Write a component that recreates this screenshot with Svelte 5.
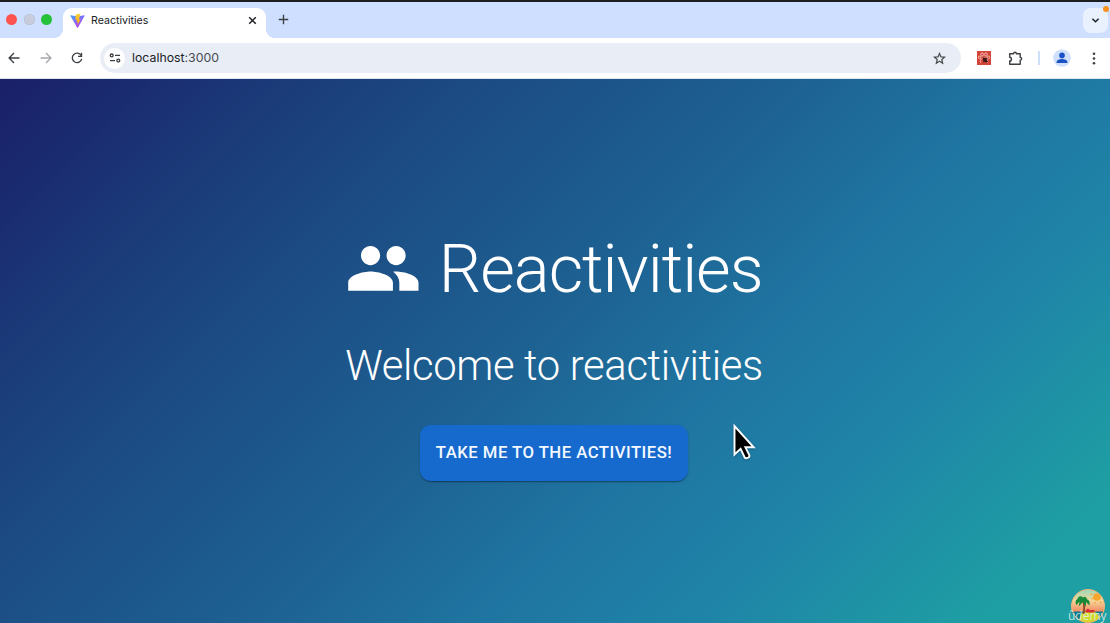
<script>
  const title = 'Reactivities';
</script>

<div class="window">
  <header class="tabstrip">
    <div class="lights"><i class="red"></i><i class="grey"></i><i class="green"></i></div>
    <div class="tab">
      <svg class="vite" width="15" height="15" viewBox="0 0 32 32">
        <defs>
          <linearGradient id="vg" x1="0" y1="0" x2=".6" y2="1"><stop offset="0" stop-color="#41a9ff" /><stop offset="1" stop-color="#b936f4" /></linearGradient>
          <linearGradient id="vy" x1="0" y1="0" x2="0" y2="1"><stop offset="0" stop-color="#ffd43b" /><stop offset="1" stop-color="#ffa000" /></linearGradient>
        </defs>
        <path fill="url(#vg)" d="M31 6.5 17 31c-.4.7-1.400.7-1.800 0L1 6.500C.5 5.600 1.300 4.600 2.300 4.800L16 7.200l13.700-2.400c1-.2 1.800.8 1.300 1.700z" />
        <path fill="url(#vy)" d="M22.500 1 12.300 3l-.9 11.800 3.500-.7-1.100 5.200 2.800-.8-1.200 8.200 7.400-13.600-4 .7z" />
      </svg>
      <span>{title}</span>
      <svg class="close" width="9" height="9" viewBox="0 0 9 9"><path d="M1.200 1.200l6.600 6.600M7.800 1.200L1.200 7.800" stroke="#202124" stroke-width="1.5" /></svg>
    </div>
    <svg class="plus" width="11" height="11" viewBox="0 0 11 11"><path d="M5.500 .8v9.400M.8 5.500h9.400" stroke="#3c4043" stroke-width="1.350" /></svg>
    <div class="tabsearch">
      <svg width="9" height="7" viewBox="0 0 9 7"><path d="M1.400 1.700l3.100 3.100 3.100-3.100" fill="none" stroke="#202124" stroke-width="1.500" /></svg>
      <b class="alert"></b>
    </div>
  </header>

  <nav class="toolbar">
    <svg class="back" width="12" height="12" viewBox="0 0 12 12"><path d="M11.500 6H1.400M6 1.100L1.100 6 6 10.900" fill="none" stroke="#3c4043" stroke-width="1.350" /></svg>
    <svg class="forward" width="12" height="12" viewBox="0 0 12 12"><path d="M.5 6h10.100M6 1.100L10.900 6 6 10.900" fill="none" stroke="#a5a8ac" stroke-width="1.350" /></svg>
    <svg class="reload" width="12" height="12" viewBox="0 0 12 12"><path d="M10.300 3.700A4.750 4.750 0 1 0 10.700 6.800" fill="none" stroke="#3c4043" stroke-width="1.350" /><path d="M10.500 .8v3.500H7" fill="none" stroke="#3c4043" stroke-width="1.350" /></svg>
    <div class="address">
      <span class="site">
        <svg width="12" height="10" viewBox="0 0 12 10" fill="none" stroke="#3c4043" stroke-width="1.350"><circle cx="2.700" cy="2.400" r="1.450" /><path d="M6 2.400h5M1 7.600h5" /><circle cx="9.300" cy="7.600" r="1.450" /></svg>
      </span>
      <span class="url">localhost<span>:3000</span></span>
      <svg class="star" width="15" height="15" viewBox="0 0 24 24"><path fill="#3c4043" d="M22 9.240l-7.190-.62L12 2 9.190 8.630 2 9.240l5.460 4.730L5.820 21 12 17.270 18.180 21l-1.630-7.030L22 9.240zM12 15.400l-3.760 2.270 1-4.280-3.320-2.880 4.380-.38L12 6.100l1.710 4.040 4.380.38-3.320 2.880 1 4.280L12 15.400z" stroke="#3c4043" stroke-width=".3" /></svg>
    </div>
    <svg class="ext" width="14" height="14" viewBox="0 0 14 14">
      <rect width="14" height="14" rx=".5" fill="#d34336" />
      <g fill="none" stroke="#f5c7c1" stroke-width=".9"><ellipse cx="5.100" cy="3.500" rx="1.300" ry="1.700" /><ellipse cx="8.900" cy="3.500" rx="1.300" ry="1.700" /><circle cx="2.600" cy="6.400" r="1.300" /><circle cx="11.400" cy="6.400" r="1.300" /><path d="M3.800 11.800c-1.500-1.800 1-5 3.200-5s4.700 3.200 3.200 5" /></g>
      <path d="M5.500 6.200l5.200 1.200-1.200 1.300 1.600 2-1.600 1-1.500-1.200-1.300 1.600z" fill="#3a1818" />
    </svg>
    <svg class="puzzle" width="15" height="15" viewBox="0 0 15 15"><path d="M1.700 2.700h3.900c0-1.900 2.800-1.900 2.800 0h3.800v3.700c1.900 0 1.900 2.800 0 2.800v4.100H1.700V10c2.300 0 2.300-3.700 0-3.700z" fill="none" stroke="#3c4043" stroke-width="1.400" stroke-linejoin="round" /></svg>
    <i class="divider"></i>
    <svg class="profile" width="18" height="18" viewBox="0 0 18 18"><circle cx="9" cy="9" r="8.800" fill="#d0e0fc" /><circle cx="9" cy="6.400" r="2.800" fill="#1a51c4" /><path d="M3.600 14v-1.100c0-1.800 3-3 5.400-3s5.400 1.200 5.400 3V14z" fill="#1a51c4" /></svg>
    <svg class="more" width="4" height="13" viewBox="0 0 4 13" fill="#3c4043"><circle cx="2" cy="1.700" r="1.300" /><circle cx="2" cy="6.500" r="1.300" /><circle cx="2" cy="11.300" r="1.300" /></svg>
  </nav>

  <main class="hero">
    <div class="brand">
      <svg viewBox="0 0 24 24" fill="#fff"><path d="M16 11c1.660 0 2.990-1.340 2.990-3S17.660 5 16 5s-3 1.340-3 3 1.340 3 3 3m-8 0c1.660 0 2.990-1.340 2.990-3S9.660 5 8 5 5 6.340 5 8s1.340 3 3 3m0 2c-2.330 0-7 1.170-7 3.500V19h14v-2.500c0-2.330-4.670-3.500-7-3.500m8 0c-.29 0-.62.02-.97.05 1.160.84 1.970 1.970 1.970 3.450V19h6v-2.500c0-2.330-4.670-3.500-7-3.500" /></svg>
      <h1>{title}</h1>
    </div>
    <h2>Welcome to reactivities</h2>
    <button>Take me to the activities!</button>
  </main>

  <svg class="cursor" width="28" height="42" viewBox="0 0 28 42"><path d="M3.500 4v28.500l6.100-5.600 4.100 8.600c1.500 1.600 5.200-.2 4.700-2.100l-4-8.100h8.300z" fill="#000" stroke="#fff" stroke-width="1.900" /></svg>

  <div class="watermark">
    <svg width="36" height="35" viewBox="0 0 36 35">
      <defs>
        <linearGradient id="sky" x1="0" y1="0" x2="0" y2="1"><stop offset="0" stop-color="#8fd8bf" /><stop offset=".35" stop-color="#f3d79a" /><stop offset=".65" stop-color="#f58a62" /></linearGradient>
        <clipPath id="disc"><circle cx="18" cy="18" r="16.500" /></clipPath>
      </defs>
      <g clip-path="url(#disc)">
        <rect width="36" height="36" fill="url(#sky)" />
        <circle cx="27" cy="9" r="3.800" fill="#f9a52d" /><path d="M20.500 6l2 .8M21.500 11l1.500-.7M25 14v1.500M30 13.500l1.500 1.500" stroke="#f9a52d" stroke-width="1.300" />
        <path d="M0 23.500h36V36H0z" fill="#087b91" />
        <ellipse cx="19.500" cy="31" rx="10" ry="8.500" fill="#d3d822" />
        <path d="M13.300 12c.9 4 1.100 9 .5 14" fill="none" stroke="#8b4a23" stroke-width="1.800" />
        <path d="M13 9.500c-2-2.200-5-1.200-5.500 1.500-2.300.8-2.300 4-1 6l3-3.500-.8 5 4.300-4.500 3 5 .2-5 3 3.500c1.200-3 0-5.500-2-6-.7-2.700-3-3.500-4.200-2z" fill="#188a3c" />
        <path d="M15.500 22.500l2.500-2 1.500 1.500h5v2.500h-9z" fill="#d92c38" />
      </g>
      <circle cx="18" cy="18" r="16.500" fill="none" stroke="#f0b477" />
    </svg>
    <span>ûdemy</span>
  </div>
</div>

<style>
  :global(body) { margin: 0; overflow: hidden; }
  .window { position: relative; width: 1110px; height: 623px; display: flex; flex-direction: column; overflow: hidden; font-family: Inter, sans-serif; }
  svg { display: block; flex: none; }
  .tabstrip { box-sizing: border-box; height: 38px; display: flex; align-items: flex-start; background: #cfdfff; border-top: 2px solid #1d1e22; }
  .lights { display: flex; gap: 6.500px; padding: 12px 0 0 6px; width: 57px; box-sizing: border-box; }
  .lights i { width: 11px; height: 11px; border-radius: 50%; flex: none; }
  .red { background: #ff544d; }
  .grey { background: #c7cddd; box-shadow: inset 0 0 0 .5px #b4bccf; }
  .green { background: #25c138; }
  .tab { position: relative; box-sizing: border-box; width: 203px; height: 30px; margin: 6px 0 0 6px; padding: 0 9.500px 6px 6.500px; display: flex; align-items: center; background: #fff; border-radius: 9px 9px 0 0; font-size: 10.600px; color: #202124; }
  .tab::before, .tab::after { content: ''; position: absolute; bottom: 0; width: 9px; height: 9px; }
  .tab::before { left: -9px; background: radial-gradient(circle at 0 0, transparent 8.700px, #fff 9.300px); }
  .tab::after { right: -9px; background: radial-gradient(circle at 100% 0, transparent 8.700px, #fff 9.300px); }
  .tab span { margin-left: 6.500px; }
  .close { margin-left: auto; }
  .plus { margin: 12px 0 0 12px; }
  .tabsearch { position: relative; width: 25px; height: 25px; margin: 6px 2px 0 auto; display: flex; align-items: center; justify-content: center; background: #e9f1ff; border-radius: 8px; }
  .alert { position: absolute; right: -1px; top: -2px; width: 6px; height: 6px; border-radius: 50%; background: #f7921e; }
  .toolbar { box-sizing: border-box; height: 41px; display: flex; align-items: center; padding: 0 14px 0 8px; background: #fff; border-bottom: 1px solid #dfe5ed; flex: none; }
  .forward { margin-left: 19.500px; }
  .reload { margin-left: 19.500px; }
  .address { box-sizing: border-box; width: 861px; height: 30px; margin-left: 17px; padding: 0 14px 0 4px; display: flex; align-items: center; border-radius: 15px; background: #e9eef6; }
  .site { width: 21px; height: 21px; display: flex; align-items: center; justify-content: center; border-radius: 50%; background: #fff; }
  .url { margin-left: 7px; font-size: 12.300px; line-height: 16px; padding-bottom: 1px; color: #202124; }
  .url span { color: #474b50; }
  .star { margin-left: auto; }
  .ext { margin-left: 16px; }
  .puzzle { margin-left: 17px; }
  .divider { width: 2px; height: 14px; margin-left: 15px; background: #cfdff8; }
  .profile { margin-left: 13px; }
  .more { margin-left: auto; }
  .hero { flex: 1; display: flex; flex-direction: column; align-items: center; gap: 33.500px; padding: 150.500px 2px 0 0; box-sizing: border-box; color: #fff; font-family: Roboto, sans-serif; background: linear-gradient(135deg, #1a2068 0%, #1a2b70 8%, #1b3f7b 20%, #1c5086 33%, #1d6091 47%, #1f75a1 62%, #1f84a8 75%, #1e9fa3 92%); }
  .brand { display: flex; align-items: center; gap: 16.700px; height: 78px; }
  .brand svg { width: 76.700px; height: 76.700px; }
  h1, h2 { margin: 0; font-weight: 300; white-space: nowrap; }
  h1 { font-size: 66.900px; line-height: 78px; letter-spacing: -.01562em; }
  h2 { font-size: 41.800px; line-height: 50px; letter-spacing: -.00833em; }
  button { box-sizing: border-box; width: 268px; height: 56px; padding: 0 0 1px; border: 0; border-radius: 11px; background: #176acd; color: #f4f9ff; font: 500 16.720px Roboto, sans-serif; letter-spacing: .02857em; text-transform: uppercase; white-space: nowrap; box-shadow: 0 2px 1px -1px rgba(0,0,0,.2), 0 1px 1px rgba(0,0,0,.14), 0 1px 3px rgba(0,0,0,.12); }
  .cursor { position: absolute; left: 731px; top: 422px; filter: drop-shadow(0 1px 1px rgba(0,0,0,.25)); }
  .watermark { position: absolute; left: 1068px; top: 588px; width: 42px; height: 35px; }
  .watermark svg { margin-left: 2px; }
  .watermark span { position: absolute; left: 0; top: 21px; font: 12px/14px "Open Sans", sans-serif; color: rgba(225,240,235,.85); }
</style>
